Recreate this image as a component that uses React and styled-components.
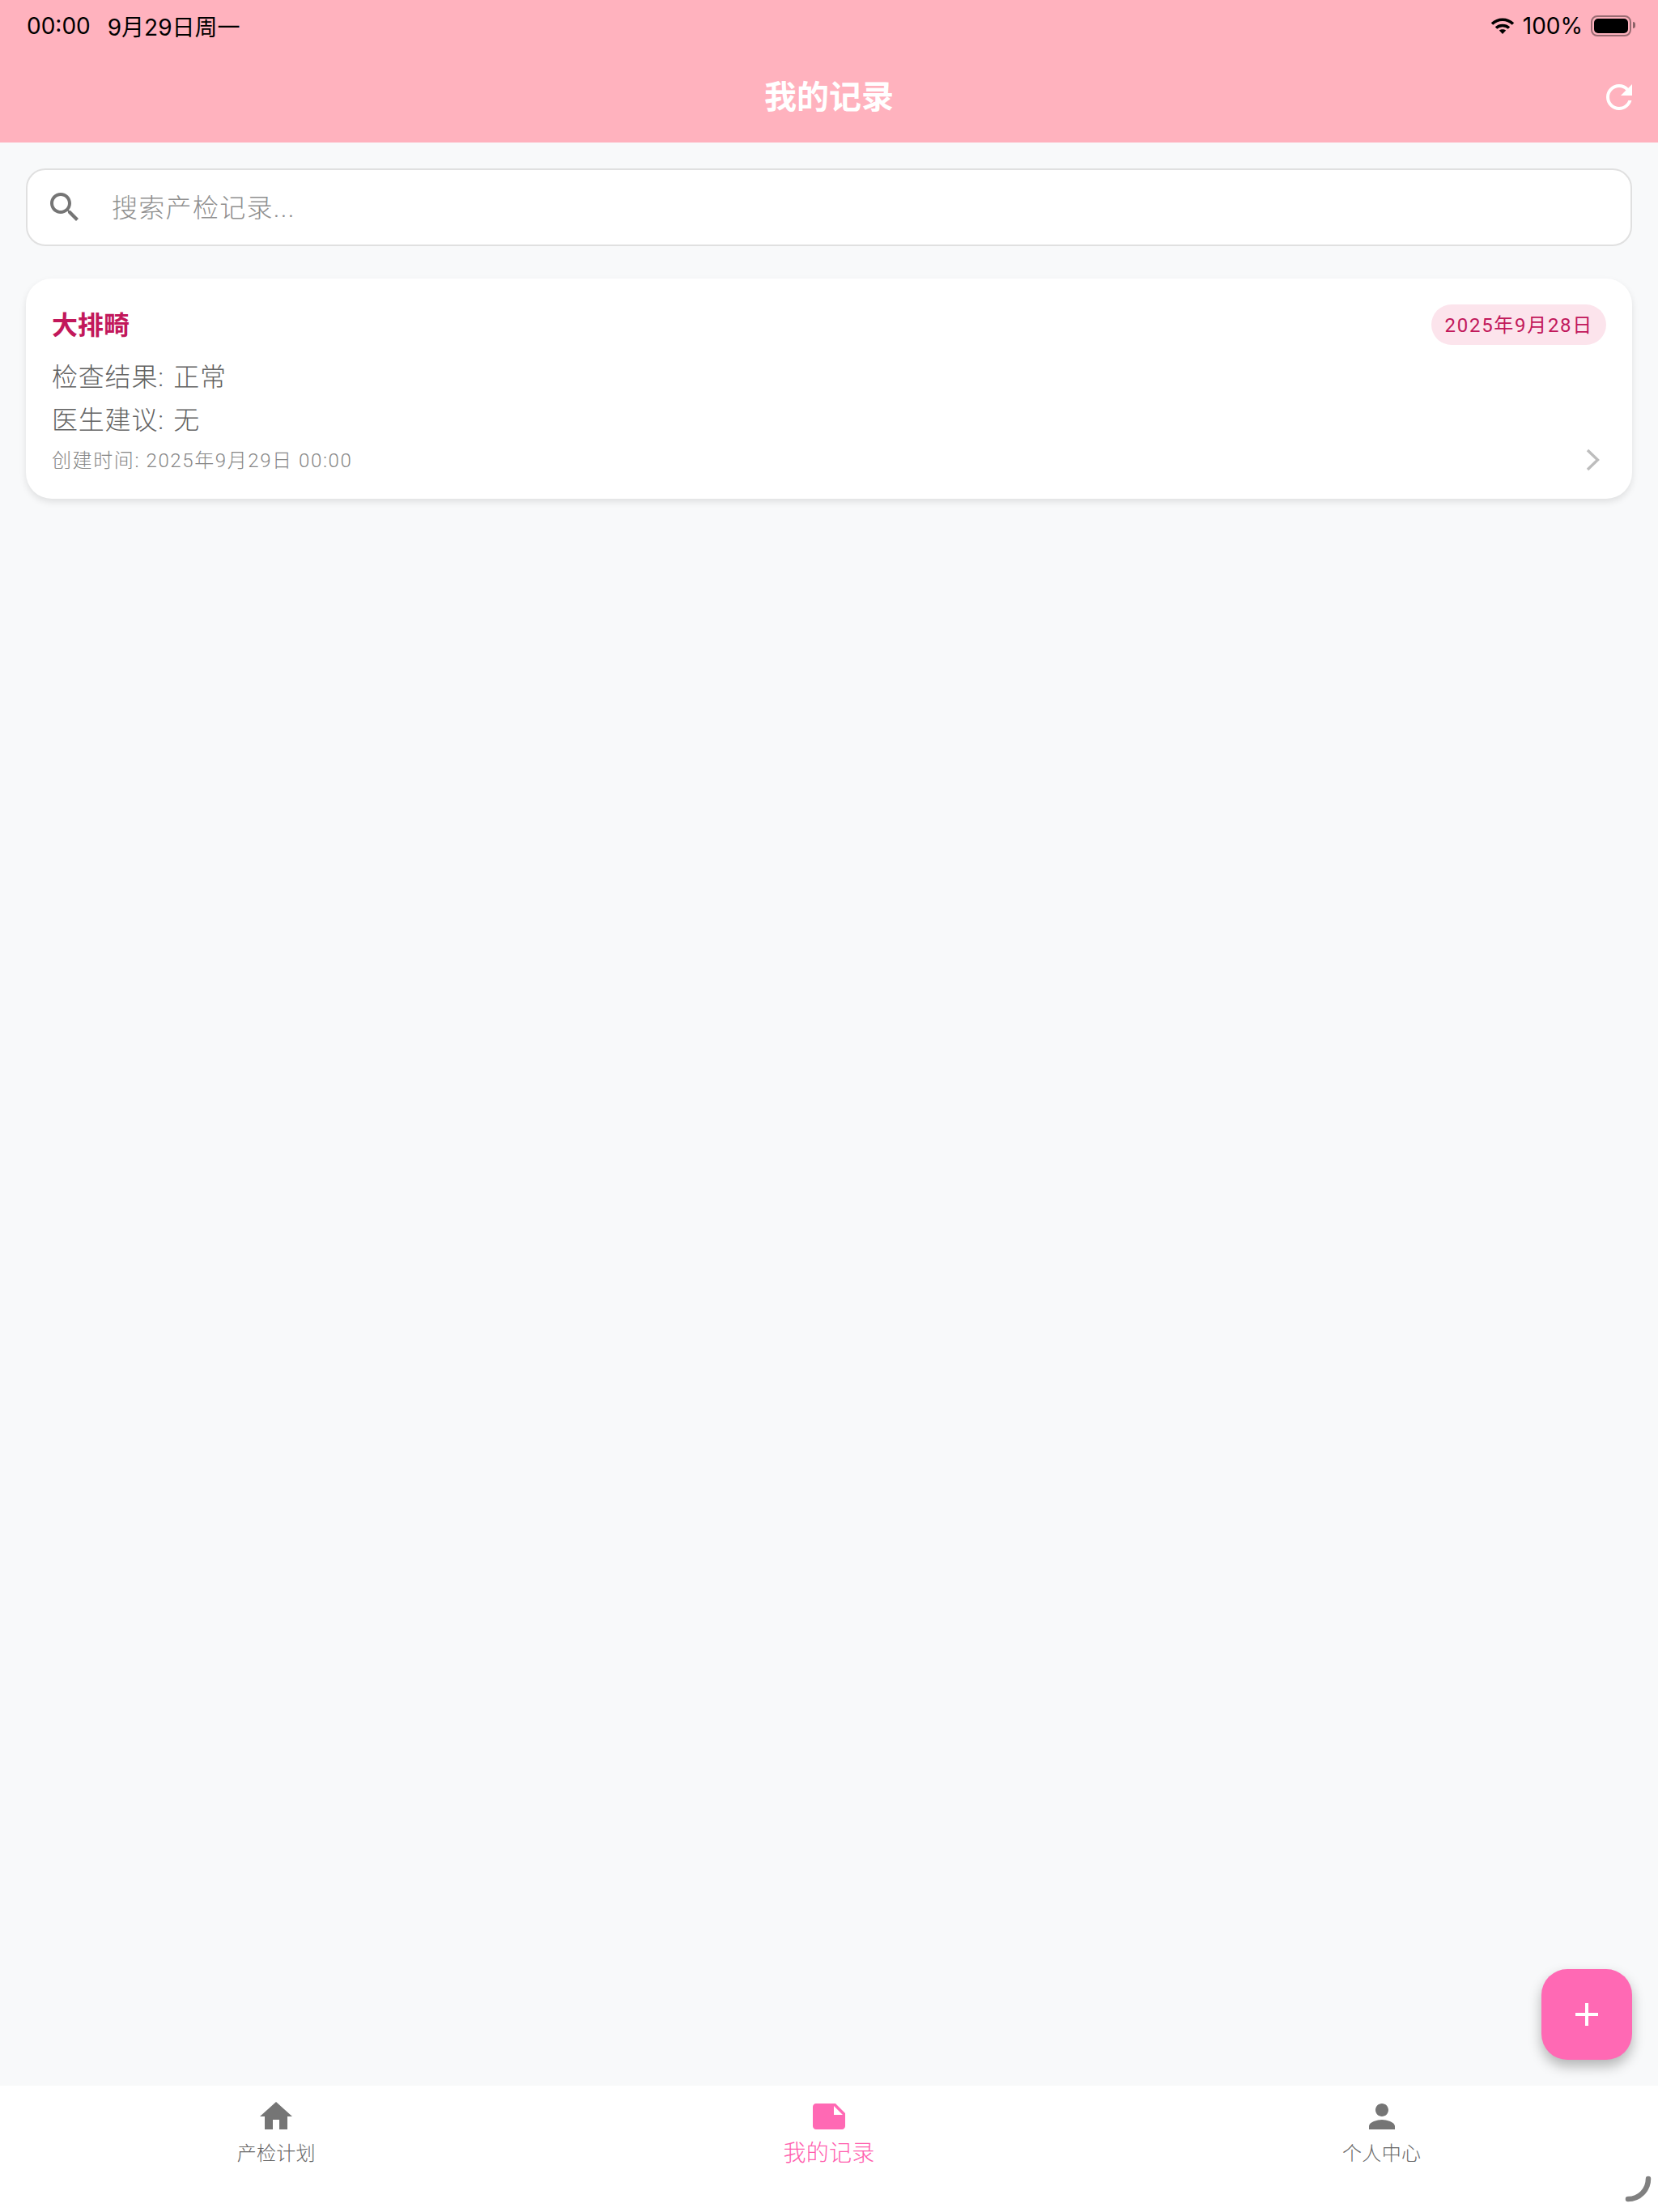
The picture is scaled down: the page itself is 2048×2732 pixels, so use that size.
import React from 'react';
import styled, { createGlobalStyle } from 'styled-components';

const GlobalStyle = createGlobalStyle`
  html, body { margin: 0; padding: 0; }
  body { font-family: Roboto, "Noto Sans CJK SC", sans-serif; background: #f8f9fa; }
`;

const Page = styled.div`
  position: relative;
  width: 2048px;
  height: 2732px;
  display: flex;
  flex-direction: column;
  overflow: hidden;
  background: #f8f9fa;
`;

const Header = styled.header`
  height: 176px;
  flex: none;
  background: #ffb2be;
  display: flex;
  flex-direction: column;
`;

const StatusBar = styled.div`
  height: 64px;
  padding: 0 33px 0 33px;
  display: flex;
  align-items: center;
  justify-content: space-between;
  color: #000;
  font-family: Inter, "Noto Sans CJK SC", sans-serif;
  font-size: 28px;
`;

const StatusGroup = styled.div`
  display: flex;
  align-items: center;
  gap: ${p => p.$gap}px;
`;

const Battery = styled.div`
  position: relative;
  width: 50px;
  height: 26px;
  box-sizing: border-box;
  border: 2px solid rgba(0, 0, 0, 0.4);
  border-radius: 8px;
  padding: 2px;
  &::before {
    content: '';
    display: block;
    height: 100%;
    background: #000;
    border-radius: 5px;
  }
  &::after {
    content: '';
    position: absolute;
    right: -7px;
    top: 6px;
    width: 3px;
    height: 8px;
    background: rgba(0, 0, 0, 0.45);
    border-radius: 0 3px 3px 0;
  }
`;

const TitleRow = styled.div`
  flex: 1;
  position: relative;
  display: flex;
  align-items: center;
  justify-content: center;
  padding-top: 2px;
`;

const Title = styled.h1`
  margin: 0;
  color: #fff;
  font-size: 40px;
  font-weight: 700;
  line-height: 48px;
`;

const RefreshButton = styled.div`
  position: absolute;
  right: 24px;
  top: 32px;
  width: 48px;
  height: 48px;
`;

const Main = styled.main`
  flex: 1;
  padding: 32px 32px 0;
  display: flex;
  flex-direction: column;
  gap: 40px;
`;

const SearchBox = styled.div`
  height: 96px;
  box-sizing: border-box;
  background: #fff;
  border: 2px solid #e0e0e0;
  border-radius: 24px;
  padding-left: 22px;
  display: flex;
  align-items: center;
  gap: 34px;
`;

const Placeholder = styled.span`
  color: #8f8f8f;
  font-size: 32px;
  font-weight: 300;
  letter-spacing: 1.3px;
  margin-top: -4px;
`;

const Card = styled.section`
  height: 272px;
  box-sizing: border-box;
  background: #fff;
  border-radius: 32px;
  padding: 32px;
  box-shadow: 0 4px 8px rgba(0, 0, 0, 0.1);
  display: flex;
  flex-direction: column;
`;

const CardTop = styled.div`
  display: flex;
  align-items: center;
  justify-content: space-between;
  height: 50px;
  margin-bottom: 14px;
`;

const CardTitle = styled.h2`
  margin: -5px 0 0;
  color: #c2185b;
  font-size: 32px;
  font-weight: 700;
`;

const DateBadge = styled.span`
  height: 50px;
  box-sizing: border-box;
  padding: 0 16px 3px 17px;
  border-radius: 25px;
  background: #fce4ec;
  color: #c2185b;
  font-size: 24px;
  letter-spacing: 1.7px;
  display: flex;
  align-items: center;
`;

const InfoLine = styled.p`
  margin: 0;
  height: 53px;
  line-height: 53px;
  color: #626262;
  font-size: 32px;
  font-weight: 300;
  letter-spacing: 0.8px;
  word-spacing: 3px;
`;

const CardBottom = styled.div`
  display: flex;
  align-items: center;
  justify-content: space-between;
  height: 40px;
  margin-top: 2px;
  padding-right: 7px;
`;

const MetaText = styled.span`
  color: #868686;
  font-size: 24px;
  font-weight: 300;
  letter-spacing: 1.6px;
`;

const ChevronWrap = styled.span`
  display: flex;
  margin-top: 3px;
`;

const Fab = styled.div`
  position: absolute;
  right: 32px;
  bottom: 188px;
  width: 112px;
  height: 112px;
  border-radius: 32px;
  background: #ff69b4;
  box-shadow: 0 8px 16px rgba(0, 0, 0, 0.28);
  display: flex;
  align-items: center;
  justify-content: center;
`;

const BottomNav = styled.nav`
  height: 156px;
  flex: none;
  background: #fff;
  display: grid;
  grid-template-columns: repeat(3, 1fr);
`;

const NavItem = styled.div`
  padding-top: 14px;
  display: flex;
  flex-direction: column;
  align-items: center;
  color: ${p => (p.$active ? '#ff5cad' : '#666')};
`;

const NavLabel = styled.span`
  font-size: ${p => (p.$active ? 28 : 24)}px;
  font-weight: 300;
  line-height: ${p => (p.$active ? 40 : 44)}px;
  letter-spacing: 0.3px;
  margin-top: ${p => (p.$active ? 2 : 0)}px;
`;

const Spinner = styled.svg`
  position: absolute;
  right: 0;
  bottom: 0;
`;

const Icon = ({ d, size = 48, color = 'currentColor' }) => (
  <svg width={size} height={size} viewBox="0 0 24 24" fill={color}>
    <path d={d} />
  </svg>
);

const paths = {
  search: 'M15.5 14h-.79l-.28-.27C15.41 12.59 16 11.11 16 9.5 16 5.91 13.09 3 9.5 3S3 5.91 3 9.5 5.91 16 9.5 16c1.61 0 3.09-.59 4.23-1.57l.27.28v.79l5 4.99L20.49 19l-4.99-5zm-6 0C7.01 14 5 11.99 5 9.5S7.01 5 9.5 5 14 7.01 14 9.5 11.99 14 9.5 14z',
  refresh: 'M17.65 6.35C16.2 4.9 14.21 4 12 4c-4.42 0-7.99 3.58-7.99 8s3.57 8 7.99 8c3.73 0 6.84-2.55 7.73-6h-2.08c-.82 2.33-3.04 4-5.65 4-3.31 0-6-2.69-6-6s2.69-6 6-6c1.66 0 3.14.69 4.22 1.78L13 11h7V4l-2.35 2.35z',
  home: 'M10 20v-6h4v6h5v-8h3L12 3 2 12h3v8z',
  note: 'M22 10l-6-6H4c-1.1 0-2 .9-2 2v12.01c0 1.1.9 1.99 2 1.99l16-.01c1.1 0 2-.89 2-1.99v-8zm-7-4.5l5.5 5.5H15V5.5z',
  person: 'M12 12c2.21 0 4-1.79 4-4s-1.79-4-4-4-4 1.79-4 4 1.79 4 4 4zm0 2c-2.67 0-8 1.34-8 4v2h16v-2c0-2.66-5.33-4-8-4z',
  add: 'M19 13h-6v6h-2v-6H5v-2h6V5h2v6h6v2z',
};

const WifiIcon = () => (
  <svg width="30" height="22" viewBox="0 0 30 22" fill="none" stroke="#000" strokeWidth="3.6">
    <path d="M2 8.5C9.5 1.5 20.5 1.5 28 8.5" />
    <path d="M7 13.5C11.5 9.5 18.5 9.5 23 13.5" />
    <path d="M15 21l-4.2-4.4c2.4-1.8 6-1.8 8.4 0z" fill="#000" stroke="none" />
  </svg>
);

const Chevron = () => (
  <svg width="18" height="28" viewBox="0 0 18 28" fill="none" stroke="#bdbdbd" strokeWidth="3.4">
    <path d="M2 2l12.5 12L2 26" />
  </svg>
);

const navItems = [
  { label: '产检计划', icon: paths.home, iconColor: '#757575' },
  { label: '我的记录', icon: paths.note, iconColor: '#ff69b4', active: true },
  { label: '个人中心', icon: paths.person, iconColor: '#757575' },
];

export default function App() {
  return (
    <Page>
      <GlobalStyle />
      <Header>
        <StatusBar>
          <StatusGroup $gap={21}>
            <span>00:00</span>
            <span>9月29日周一</span>
          </StatusGroup>
          <StatusGroup $gap={10}>
            <WifiIcon />
            <span>100%</span>
            <Battery />
          </StatusGroup>
        </StatusBar>
        <TitleRow>
          <Title>我的记录</Title>
          <RefreshButton>
            <Icon d={paths.refresh} color="#fff" />
          </RefreshButton>
        </TitleRow>
      </Header>
      <Main>
        <SearchBox>
          <Icon d={paths.search} color="#757575" />
          <Placeholder>搜索产检记录...</Placeholder>
        </SearchBox>
        <Card>
          <CardTop>
            <CardTitle>大排畸</CardTitle>
            <DateBadge>2025年9月28日</DateBadge>
          </CardTop>
          <InfoLine>检查结果: 正常</InfoLine>
          <InfoLine>医生建议: 无</InfoLine>
          <CardBottom>
            <MetaText>创建时间: 2025年9月29日 00:00</MetaText>
            <ChevronWrap>
              <Chevron />
            </ChevronWrap>
          </CardBottom>
        </Card>
      </Main>
      <Fab>
        <Icon d={paths.add} color="#fff" />
      </Fab>
      <BottomNav>
        {navItems.map(item => (
          <NavItem key={item.label} $active={item.active}>
            <Icon d={item.icon} color={item.iconColor} />
            <NavLabel $active={item.active}>{item.label}</NavLabel>
          </NavItem>
        ))}
      </BottomNav>
      <Spinner width="48" height="48" viewBox="0 0 48 48" fill="none" stroke="#808080" strokeWidth="6.5" strokeLinecap="round">
        <path d="M36 7A25 25 0 0 1 11 32" />
      </Spinner>
    </Page>
  );
}
